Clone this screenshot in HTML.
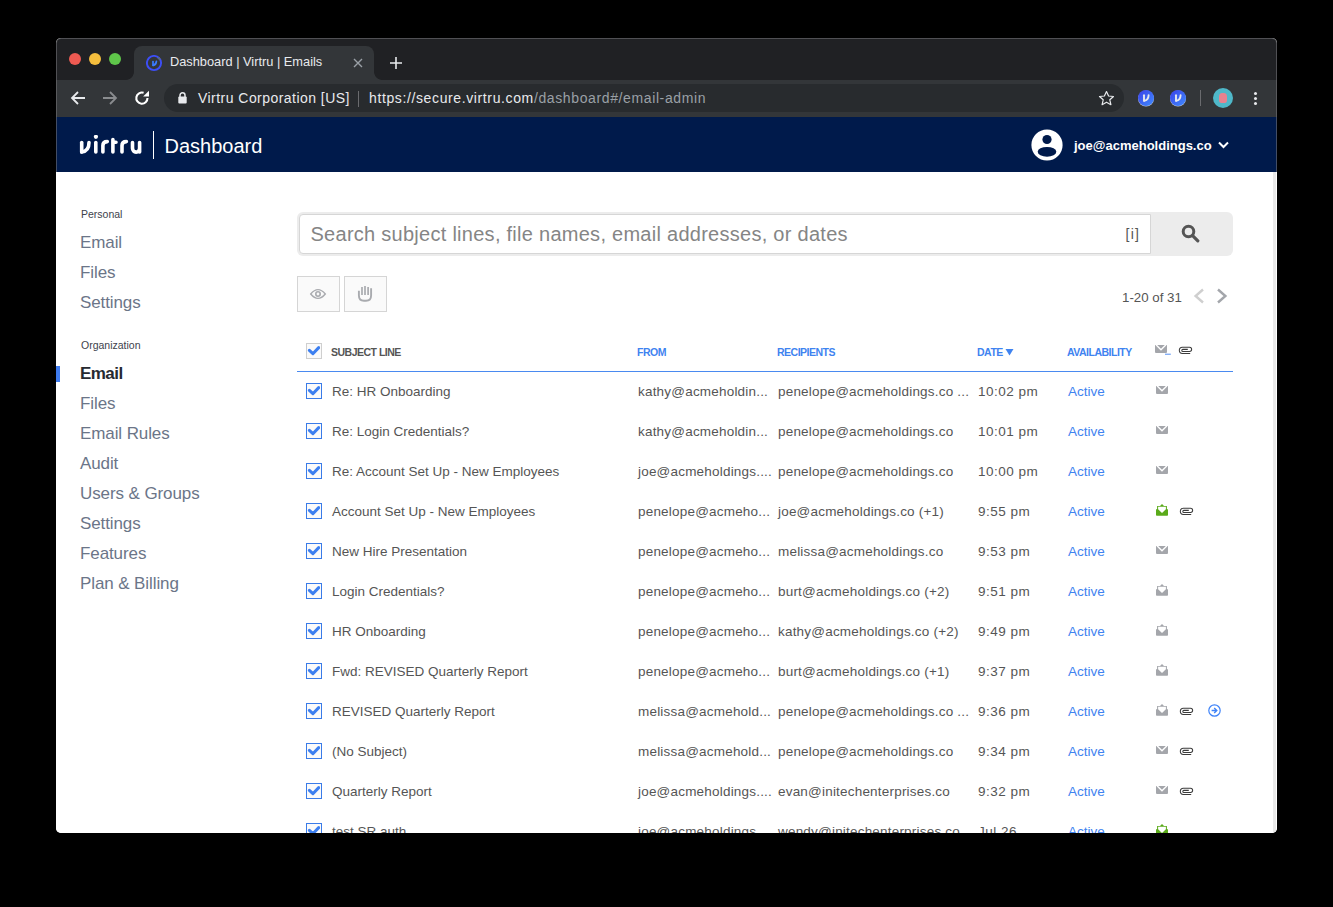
<!DOCTYPE html>
<html><head><meta charset="utf-8">
<style>
*{box-sizing:border-box;margin:0;padding:0}
html,body{width:1333px;height:907px;overflow:hidden;background:#000;font-family:"Liberation Sans",sans-serif}
.abs{position:absolute}
#win{position:absolute;left:56px;top:38px;width:1221px;height:795px;border-radius:5px;overflow:hidden;background:#fff}
#frame{position:absolute;left:56px;top:38px;width:1221px;height:134px;border-radius:5px 5px 0 0;border:1px solid rgba(120,121,124,0.55);border-bottom:none;pointer-events:none}
#tabbar{position:absolute;left:0;top:0;width:1221px;height:42px;background:#202124;border-radius:5px 5px 0 0}
.dot{position:absolute;width:12.5px;height:12.5px;border-radius:50%;top:14.75px}
#tab{position:absolute;left:78px;top:7.6px;width:240px;height:34.4px;background:#333639;border-radius:8px 8px 0 0}
#toolbar{position:absolute;left:0;top:42px;width:1221px;height:37px;background:#333639}
#omni{position:absolute;left:108px;top:4px;width:960px;height:27.5px;background:#282b2e;border-radius:14px}
#header{position:absolute;left:0;top:78.5px;width:1221px;height:55.5px;background:#001a4b}
#page{position:absolute;left:0;top:134px;width:1221px;height:661px;background:#fff}
#scroll{position:absolute;left:1216.8px;top:0;width:3.4px;height:662px;background:#e9e9e9}
.side{position:absolute;left:24px;color:#6b7588;font-size:17px;letter-spacing:-0.1px;white-space:nowrap}
.sidehead{position:absolute;left:25px;color:#3d424c;font-size:10.5px;white-space:nowrap}

.cb{position:absolute;width:16px;height:16px;border:1.5px solid #3a7be8;background:#fafafa}
.cb svg{position:absolute;left:-0.2px;top:0px}
.row{position:absolute;left:0;width:1221px;height:40px}
.cell{position:absolute;top:13px;font-size:13.5px;line-height:16px;color:#555;white-space:nowrap}
.hd{position:absolute;top:175px;font-size:10.5px;line-height:11px;letter-spacing:-0.5px;font-weight:bold;color:#3f83f0;white-space:nowrap}
</style></head><body>
<div id="win">
  <div id="tabbar">
    <div class="dot" style="left:12.75px;background:#ee5a52"></div>
    <div class="dot" style="left:32.75px;background:#f5be3d"></div>
    <div class="dot" style="left:52.75px;background:#5fc64a"></div>
    <div class="abs" style="left:318px;top:34px;width:8px;height:8px;background:radial-gradient(circle at 100% 0%,#202124 7.5px,#333639 8.2px)"></div>
    <div class="abs" style="left:70px;top:34px;width:8px;height:8px;background:radial-gradient(circle at 0% 0%,#202124 7.5px,#333639 8.2px)"></div>
    <div id="tab">
      <svg class="abs" style="left:12px;top:9.4px" width="17" height="17" viewBox="0 0 17 17"><circle cx="8" cy="8" r="7.1" fill="none" stroke="#3d4ef5" stroke-width="1.9"/><path d="M11.9 2.9A7.1 7.1 0 0 1 14.1 4.5" fill="none" stroke="#5a6a80" stroke-width="1.9"/><g fill="none" stroke="#3a7bff" stroke-width="1.7" stroke-linecap="round"><path d="M7 6.6V10.3"/><path d="M10.4 6.4Q10.2 9.8 7.2 10.3"/></g></svg>
      <div class="abs" style="left:36px;top:8.4px;font-size:12.8px;color:#e8eaed;white-space:nowrap">Dashboard | Virtru | Emails</div>
      <svg class="abs" style="left:219px;top:12.4px" width="10" height="10" viewBox="0 0 10 10"><path d="M1 1L9 9M9 1L1 9" stroke="#9aa0a6" stroke-width="1.4"/></svg>
    </div>
    <svg class="abs" style="left:333px;top:18px" width="14" height="14" viewBox="0 0 14 14"><path d="M7 1V13M1 7H13" stroke="#e8eaed" stroke-width="1.6"/></svg>
  </div>
  <div id="toolbar">
    <svg class="abs" style="left:14px;top:10px" width="16" height="16" viewBox="0 0 16 16"><path d="M15 8H2M8 2L2 8L8 14" fill="none" stroke="#e8eaed" stroke-width="1.8"/></svg>
    <svg class="abs" style="left:46px;top:10px" width="16" height="16" viewBox="0 0 16 16"><path d="M1 8H14M8 2L14 8L8 14" fill="none" stroke="#8a8c8f" stroke-width="1.8"/></svg>
    <svg class="abs" style="left:78px;top:10px" width="17" height="17" viewBox="0 0 17 17"><path d="M13.5 8.1A5.6 5.6 0 1 1 9.6 2.8" fill="none" stroke="#fff" stroke-width="2.1"/><path d="M9.1 6.5H15V0.7Z" fill="#fff"/></svg>
    <div id="omni">
      <svg class="abs" style="left:13.5px;top:7.8px" width="9" height="12" viewBox="0 0 9 12"><path d="M2 5V3.3A2.5 2.5 0 0 1 7 3.3V5" fill="none" stroke="#e8eaed" stroke-width="1.5"/><rect x="0.3" y="4.4" width="8.4" height="7" rx="1" fill="#e8eaed"/></svg>
      <div class="abs" style="left:34px;top:6px;font-size:14px;letter-spacing:0.46px;color:#e8eaed;white-space:nowrap">Virtru Corporation [US]</div>
      <div class="abs" style="left:194px;top:7px;width:1px;height:16px;background:#6a6b6e"></div>
      <div class="abs" style="left:205px;top:6px;font-size:14px;letter-spacing:0.62px;color:#9aa0a6;white-space:nowrap"><span style="color:#e8eaed">https://secure.virtru.com</span>/dashboard#/email-admin</div>
      <svg class="abs" style="left:934px;top:6px" width="17" height="17" viewBox="0 0 17 17"><path d="M8.5 1.5L10.6 6L15.5 6.5L11.8 9.8L12.9 14.7L8.5 12.2L4.1 14.7L5.2 9.8L1.5 6.5L6.4 6Z" fill="none" stroke="#e8eaed" stroke-width="1.2" stroke-linejoin="round"/></svg>
    </div>
    <svg class="abs" style="left:1082px;top:10px" width="17" height="17" viewBox="0 0 17 17"><defs><linearGradient id="g1082" x1="0" y1="0" x2="1" y2="1"><stop offset="0" stop-color="#3b3fe8"/><stop offset="1" stop-color="#3f8cff"/></linearGradient></defs><circle cx="8" cy="8.6" r="8" fill="#c9cbd4"/><circle cx="8" cy="8" r="8" fill="url(#g1082)"/><g fill="none" stroke="#e6e7ee" stroke-width="1.9" stroke-linecap="round"><path d="M6 5.2V10.8"/><path d="M10.6 5.2Q10.4 10.2 6.2 10.8"/></g></svg>
    <svg class="abs" style="left:1114px;top:10px" width="17" height="17" viewBox="0 0 17 17"><defs><linearGradient id="g1114" x1="0" y1="0" x2="1" y2="1"><stop offset="0" stop-color="#3b3fe8"/><stop offset="1" stop-color="#3f8cff"/></linearGradient></defs><circle cx="8" cy="8.6" r="8" fill="#c9cbd4"/><circle cx="8" cy="8" r="8" fill="url(#g1114)"/><g fill="none" stroke="#e6e7ee" stroke-width="1.9" stroke-linecap="round"><path d="M6 5.2V10.8"/><path d="M10.6 5.2Q10.4 10.2 6.2 10.8"/></g></svg>
    <div class="abs" style="left:1144px;top:10px;width:1px;height:16px;background:#6a6b6e"></div>
    <div class="abs" style="left:1157px;top:8px;width:20px;height:20px;border-radius:50%;background:#4fb8c9"></div>
    <div class="abs" style="left:1163px;top:13px;width:8px;height:10px;border-radius:40% 40% 30% 30%;background:#e8828f"></div>
    <div class="abs" style="left:1198px;top:12px;width:3px;height:3px;border-radius:50%;background:#e8eaed;box-shadow:0 5px 0 #e8eaed,0 10px 0 #e8eaed"></div>
  </div>
  <div id="header">
    <svg class="abs" style="left:23px;top:18px" width="64" height="22" viewBox="0 0 64 22"><g fill="none" stroke="#fff" stroke-width="3.6" stroke-linecap="round"><path d="M2.7 7.6V17"/><path d="M10 7.6Q10 16.3 2.7 17"/><path d="M16.8 7.6V17"/><path d="M23.9 17V10.5Q23.9 6.6 28.3 6.6"/><path d="M33.9 4.6V17M33.9 7.3H37"/><path d="M43 17V10.5Q43 6.6 47.4 6.6"/><path d="M53.5 7.6V13.3A3.55 3.8 0 0 0 60.6 13.3V7.6M60.6 12V17"/></g><circle cx="16.9" cy="1.8" r="2.1" fill="#fff"/></svg>
    <div class="abs" style="left:97px;top:14px;width:1px;height:28px;background:#fff"></div>
    <div class="abs" style="left:108.5px;top:18.5px;font-size:20px;color:#fff;white-space:nowrap">Dashboard</div>
    <svg class="abs" style="left:975.3px;top:12.3px" width="32" height="32" viewBox="0 0 32 32"><circle cx="16" cy="16" r="15.6" fill="#fff"/><circle cx="16" cy="10.5" r="4.6" fill="#001a4b"/><ellipse cx="16" cy="22.8" rx="9.3" ry="4.9" fill="#001a4b"/></svg>
    <div class="abs" style="left:1018px;top:21px;font-size:13px;font-weight:bold;color:#fff;white-space:nowrap">joe@acmeholdings.co</div>
    <svg class="abs" style="left:1162px;top:24px" width="11" height="8" viewBox="0 0 11 8"><path d="M1 1.5L5.5 6L10 1.5" fill="none" stroke="#fff" stroke-width="2"/></svg>
  </div>
  <div id="page">
    <div class="sidehead" style="top:36px">Personal</div>
    <div class="side" style="top:61px">Email</div>
    <div class="side" style="top:91px">Files</div>
    <div class="side" style="top:121px">Settings</div>
    <div class="sidehead" style="top:167px">Organization</div>
    <div class="abs" style="left:0;top:194px;width:4px;height:16px;background:#3f7cf0"></div>
    <div class="side" style="top:192px;color:#262a31;font-weight:bold;letter-spacing:-0.55px">Email</div>
    <div class="side" style="top:222px">Files</div>
    <div class="side" style="top:252px">Email Rules</div>
    <div class="side" style="top:282px">Audit</div>
    <div class="side" style="top:312px">Users &amp; Groups</div>
    <div class="side" style="top:342px">Settings</div>
    <div class="side" style="top:372px">Features</div>
    <div class="side" style="top:402px">Plan &amp; Billing</div>
    <div class="abs" style="left:241px;top:40px;width:936px;height:44px;background:#ececec;border-radius:6px"></div>
    <div class="abs" style="left:243px;top:42px;width:852px;height:40px;background:#fff;border:1px solid #d6d6d6;border-radius:4px 0 0 4px"></div>
    <div class="abs" style="left:254.5px;top:51px;font-size:20px;line-height:22px;letter-spacing:0.27px;color:#858585;white-space:nowrap">Search subject lines, file names, email addresses, or dates</div>
    <div class="abs" style="left:1069.5px;top:53px;font-size:14px;line-height:18px;letter-spacing:1.3px;color:#555;white-space:nowrap">[i]</div>
    <svg class="abs" style="left:1125px;top:52px" width="19" height="19" viewBox="0 0 19 19"><circle cx="7.5" cy="7.5" r="5.3" fill="none" stroke="#555" stroke-width="3"/><path d="M11.6 11.6L16.8 16.8" stroke="#555" stroke-width="3.2" stroke-linecap="round"/></svg>
    <div class="abs" style="left:241px;top:104px;width:43px;height:36px;background:#fafafa;border:1px solid #d5d5d5"></div>
    <svg class="abs" style="left:252px;top:115px" width="20" height="14" viewBox="0 0 20 14"><path d="M2.7 7Q10 -1.8 17.3 7Q10 15.8 2.7 7Z" fill="none" stroke="#a9abaf" stroke-width="1.4"/><circle cx="10" cy="7" r="2.2" fill="none" stroke="#a9abaf" stroke-width="1.6"/></svg>
    <div class="abs" style="left:288px;top:104px;width:43px;height:36px;background:#fafafa;border:1px solid #d5d5d5"></div>
    <svg class="abs" style="left:300px;top:112px" width="18" height="19" viewBox="0 0 18 19"><path d="M2.9 6.8V11.5Q2.9 16.8 8 16.8H10Q15.1 16.8 15.1 11.5V4.2" fill="none" stroke="#a9abaf" stroke-width="1.9"/><path d="M6 11V3M9 11V1.9M12.1 11V3" stroke="#a9abaf" stroke-width="1.7"/></svg>
    <div class="abs" style="left:1066px;top:117.5px;font-size:13.3px;line-height:16px;color:#555;white-space:nowrap">1-20 of 31</div>
    <svg class="abs" style="left:1136px;top:115px" width="14" height="18" viewBox="0 0 14 18"><path d="M11 2.5L3.6 9L11 15.5" fill="none" stroke="#cfcfcf" stroke-width="2.4"/></svg>
    <svg class="abs" style="left:1159px;top:115px" width="14" height="18" viewBox="0 0 14 18"><path d="M3 2.5L10.4 9L3 15.5" fill="none" stroke="#a3a6ab" stroke-width="2.4"/></svg>

    <div class="cb" style="left:250px;top:171px;border:1px solid #cfcfcf"><svg width="13" height="12" viewBox="0 0 13 12" style="left:0.3px;top:-0.5px"><path d="M2.4 6.4L5.9 9.7L11.7 3.6" fill="none" stroke="#3c7ff0" stroke-width="3" stroke-linecap="round" stroke-linejoin="round"/></svg></div>
    <div class="hd" style="left:275px;color:#555">SUBJECT LINE</div>
    <div class="hd" style="left:581px">FROM</div>
    <div class="hd" style="left:721px">RECIPIENTS</div>
    <div class="hd" style="left:921px">DATE</div>
    <svg class="abs" style="left:949px;top:176px" width="9" height="8" viewBox="0 0 9 8"><path d="M0.5 1H8.5L4.5 7.5Z" fill="#3f83f0"/></svg>
    <div class="hd" style="left:1011px">AVAILABILITY</div>
    <svg class="abs" style="left:1099px;top:173px" width="16" height="11" viewBox="0 0 16 11"><path d="M0 0H12V7Q12 8 11 8H1Q0 8 0 7Z" fill="#a4a6ab"/><path d="M1 -0.2L6 4.8L11 -0.2" fill="none" stroke="#fff" stroke-width="1.4"/><rect x="10" y="8.6" width="5.8" height="1.3" fill="#7aa8f5"/></svg>
    <svg class="abs" style="left:1118.5px;top:167px" width="20" height="20" viewBox="0 0 20 20"><path d="M15.2 14.44H7.4A3.085 3.085 0 0 1 7.4 8.27H14.55A2.095 2.095 0 0 1 14.55 12.46H7.85A1.05 1.05 0 0 1 7.85 10.36H12.8" fill="none" stroke="#3c3c3c" stroke-width="1.05"/></svg>
    <div class="abs" style="left:241px;top:198.7px;width:936px;height:1.4px;background:#4a8af0"></div>
    <div class="row" style="top:199px"><div class="cb" style="left:250px;top:12px"><svg width="13" height="12" viewBox="0 0 13 12"><path d="M2.4 6.4L5.9 9.7L11.7 3.6" fill="none" stroke="#3c7ff0" stroke-width="3" stroke-linecap="round" stroke-linejoin="round"/></svg></div><div class="cell" style="left:276px">Re: HR Onboarding</div><div class="cell" style="left:582px;letter-spacing:0.2px">kathy@acmeholdin...</div><div class="cell" style="left:722px;letter-spacing:0.2px">penelope@acmeholdings.co ...</div><div class="cell" style="left:922px;letter-spacing:0.5px">10:02 pm</div><div class="cell" style="left:1012px;color:#3f83f0">Active</div><svg class="abs" style="left:1100px;top:14.8px" width="12" height="8" viewBox="0 0 12 8"><path d="M0 0H12V7Q12 8 11 8H1Q0 8 0 7Z" fill="#a4a6ab"/><path d="M1 -0.2L6 4.8L11 -0.2" fill="none" stroke="#fff" stroke-width="1.4"/></svg></div>
    <div class="row" style="top:239px"><div class="cb" style="left:250px;top:12px"><svg width="13" height="12" viewBox="0 0 13 12"><path d="M2.4 6.4L5.9 9.7L11.7 3.6" fill="none" stroke="#3c7ff0" stroke-width="3" stroke-linecap="round" stroke-linejoin="round"/></svg></div><div class="cell" style="left:276px">Re: Login Credentials?</div><div class="cell" style="left:582px;letter-spacing:0.2px">kathy@acmeholdin...</div><div class="cell" style="left:722px;letter-spacing:0.2px">penelope@acmeholdings.co</div><div class="cell" style="left:922px;letter-spacing:0.5px">10:01 pm</div><div class="cell" style="left:1012px;color:#3f83f0">Active</div><svg class="abs" style="left:1100px;top:14.8px" width="12" height="8" viewBox="0 0 12 8"><path d="M0 0H12V7Q12 8 11 8H1Q0 8 0 7Z" fill="#a4a6ab"/><path d="M1 -0.2L6 4.8L11 -0.2" fill="none" stroke="#fff" stroke-width="1.4"/></svg></div>
    <div class="row" style="top:279px"><div class="cb" style="left:250px;top:12px"><svg width="13" height="12" viewBox="0 0 13 12"><path d="M2.4 6.4L5.9 9.7L11.7 3.6" fill="none" stroke="#3c7ff0" stroke-width="3" stroke-linecap="round" stroke-linejoin="round"/></svg></div><div class="cell" style="left:276px">Re: Account Set Up - New Employees</div><div class="cell" style="left:582px;letter-spacing:0.2px">joe@acmeholdings....</div><div class="cell" style="left:722px;letter-spacing:0.2px">penelope@acmeholdings.co</div><div class="cell" style="left:922px;letter-spacing:0.5px">10:00 pm</div><div class="cell" style="left:1012px;color:#3f83f0">Active</div><svg class="abs" style="left:1100px;top:14.8px" width="12" height="8" viewBox="0 0 12 8"><path d="M0 0H12V7Q12 8 11 8H1Q0 8 0 7Z" fill="#a4a6ab"/><path d="M1 -0.2L6 4.8L11 -0.2" fill="none" stroke="#fff" stroke-width="1.4"/></svg></div>
    <div class="row" style="top:319px"><div class="cb" style="left:250px;top:12px"><svg width="13" height="12" viewBox="0 0 13 12"><path d="M2.4 6.4L5.9 9.7L11.7 3.6" fill="none" stroke="#3c7ff0" stroke-width="3" stroke-linecap="round" stroke-linejoin="round"/></svg></div><div class="cell" style="left:276px">Account Set Up - New Employees</div><div class="cell" style="left:582px;letter-spacing:0.2px">penelope@acmeho...</div><div class="cell" style="left:722px;letter-spacing:0.2px">joe@acmeholdings.co (+1)</div><div class="cell" style="left:922px;letter-spacing:0.5px">9:55 pm</div><div class="cell" style="left:1012px;color:#3f83f0">Active</div><svg class="abs" style="left:1100px;top:12.8px" width="12" height="12" viewBox="0 0 12 12"><path d="M6 0L8 2.1H10.9V5L12 5.5V11Q12 11.8 11.2 11.8H0.8Q0 11.8 0 11V5.5L1.1 5V2.1H4Z" fill="#5aaa1a"/><path d="M2.1 2.8H9.9V5.2L6 9L2.1 5.2Z" fill="#fff"/></svg><svg class="abs" style="left:1120px;top:9px" width="20" height="20" viewBox="0 0 20 20"><path d="M15.2 14.44H7.4A3.085 3.085 0 0 1 7.4 8.27H14.55A2.095 2.095 0 0 1 14.55 12.46H7.85A1.05 1.05 0 0 1 7.85 10.36H12.8" fill="none" stroke="#3c3c3c" stroke-width="1.05"/></svg></div>
    <div class="row" style="top:359px"><div class="cb" style="left:250px;top:12px"><svg width="13" height="12" viewBox="0 0 13 12"><path d="M2.4 6.4L5.9 9.7L11.7 3.6" fill="none" stroke="#3c7ff0" stroke-width="3" stroke-linecap="round" stroke-linejoin="round"/></svg></div><div class="cell" style="left:276px">New Hire Presentation</div><div class="cell" style="left:582px;letter-spacing:0.2px">penelope@acmeho...</div><div class="cell" style="left:722px;letter-spacing:0.2px">melissa@acmeholdings.co</div><div class="cell" style="left:922px;letter-spacing:0.5px">9:53 pm</div><div class="cell" style="left:1012px;color:#3f83f0">Active</div><svg class="abs" style="left:1100px;top:14.8px" width="12" height="8" viewBox="0 0 12 8"><path d="M0 0H12V7Q12 8 11 8H1Q0 8 0 7Z" fill="#a4a6ab"/><path d="M1 -0.2L6 4.8L11 -0.2" fill="none" stroke="#fff" stroke-width="1.4"/></svg></div>
    <div class="row" style="top:399px"><div class="cb" style="left:250px;top:12px"><svg width="13" height="12" viewBox="0 0 13 12"><path d="M2.4 6.4L5.9 9.7L11.7 3.6" fill="none" stroke="#3c7ff0" stroke-width="3" stroke-linecap="round" stroke-linejoin="round"/></svg></div><div class="cell" style="left:276px">Login Credentials?</div><div class="cell" style="left:582px;letter-spacing:0.2px">penelope@acmeho...</div><div class="cell" style="left:722px;letter-spacing:0.2px">burt@acmeholdings.co (+2)</div><div class="cell" style="left:922px;letter-spacing:0.5px">9:51 pm</div><div class="cell" style="left:1012px;color:#3f83f0">Active</div><svg class="abs" style="left:1100px;top:12.8px" width="12" height="12" viewBox="0 0 12 12"><path d="M6 0L8 2.1H10.9V5L12 5.5V11Q12 11.8 11.2 11.8H0.8Q0 11.8 0 11V5.5L1.1 5V2.1H4Z" fill="#a4a6ab"/><path d="M2.1 2.8H9.9V5.2L6 9L2.1 5.2Z" fill="#fff"/></svg></div>
    <div class="row" style="top:439px"><div class="cb" style="left:250px;top:12px"><svg width="13" height="12" viewBox="0 0 13 12"><path d="M2.4 6.4L5.9 9.7L11.7 3.6" fill="none" stroke="#3c7ff0" stroke-width="3" stroke-linecap="round" stroke-linejoin="round"/></svg></div><div class="cell" style="left:276px">HR Onboarding</div><div class="cell" style="left:582px;letter-spacing:0.2px">penelope@acmeho...</div><div class="cell" style="left:722px;letter-spacing:0.2px">kathy@acmeholdings.co (+2)</div><div class="cell" style="left:922px;letter-spacing:0.5px">9:49 pm</div><div class="cell" style="left:1012px;color:#3f83f0">Active</div><svg class="abs" style="left:1100px;top:12.8px" width="12" height="12" viewBox="0 0 12 12"><path d="M6 0L8 2.1H10.9V5L12 5.5V11Q12 11.8 11.2 11.8H0.8Q0 11.8 0 11V5.5L1.1 5V2.1H4Z" fill="#a4a6ab"/><path d="M2.1 2.8H9.9V5.2L6 9L2.1 5.2Z" fill="#fff"/></svg></div>
    <div class="row" style="top:479px"><div class="cb" style="left:250px;top:12px"><svg width="13" height="12" viewBox="0 0 13 12"><path d="M2.4 6.4L5.9 9.7L11.7 3.6" fill="none" stroke="#3c7ff0" stroke-width="3" stroke-linecap="round" stroke-linejoin="round"/></svg></div><div class="cell" style="left:276px">Fwd: REVISED Quarterly Report</div><div class="cell" style="left:582px;letter-spacing:0.2px">penelope@acmeho...</div><div class="cell" style="left:722px;letter-spacing:0.2px">burt@acmeholdings.co (+1)</div><div class="cell" style="left:922px;letter-spacing:0.5px">9:37 pm</div><div class="cell" style="left:1012px;color:#3f83f0">Active</div><svg class="abs" style="left:1100px;top:12.8px" width="12" height="12" viewBox="0 0 12 12"><path d="M6 0L8 2.1H10.9V5L12 5.5V11Q12 11.8 11.2 11.8H0.8Q0 11.8 0 11V5.5L1.1 5V2.1H4Z" fill="#a4a6ab"/><path d="M2.1 2.8H9.9V5.2L6 9L2.1 5.2Z" fill="#fff"/></svg></div>
    <div class="row" style="top:519px"><div class="cb" style="left:250px;top:12px"><svg width="13" height="12" viewBox="0 0 13 12"><path d="M2.4 6.4L5.9 9.7L11.7 3.6" fill="none" stroke="#3c7ff0" stroke-width="3" stroke-linecap="round" stroke-linejoin="round"/></svg></div><div class="cell" style="left:276px">REVISED Quarterly Report</div><div class="cell" style="left:582px;letter-spacing:0.2px">melissa@acmehold...</div><div class="cell" style="left:722px;letter-spacing:0.2px">penelope@acmeholdings.co ...</div><div class="cell" style="left:922px;letter-spacing:0.5px">9:36 pm</div><div class="cell" style="left:1012px;color:#3f83f0">Active</div><svg class="abs" style="left:1100px;top:12.8px" width="12" height="12" viewBox="0 0 12 12"><path d="M6 0L8 2.1H10.9V5L12 5.5V11Q12 11.8 11.2 11.8H0.8Q0 11.8 0 11V5.5L1.1 5V2.1H4Z" fill="#a4a6ab"/><path d="M2.1 2.8H9.9V5.2L6 9L2.1 5.2Z" fill="#fff"/></svg><svg class="abs" style="left:1120px;top:9px" width="20" height="20" viewBox="0 0 20 20"><path d="M15.2 14.44H7.4A3.085 3.085 0 0 1 7.4 8.27H14.55A2.095 2.095 0 0 1 14.55 12.46H7.85A1.05 1.05 0 0 1 7.85 10.36H12.8" fill="none" stroke="#3c3c3c" stroke-width="1.05"/></svg><svg class="abs" style="left:1151.5px;top:12.5px" width="13" height="13" viewBox="0 0 13 13"><circle cx="6.5" cy="6.5" r="5.7" fill="none" stroke="#3f83f8" stroke-width="1.2"/><path d="M3.6 6.5H8.6M6.2 3.9L8.8 6.5L6.2 9.1" fill="none" stroke="#3f83f8" stroke-width="1.4"/></svg></div>
    <div class="row" style="top:559px"><div class="cb" style="left:250px;top:12px"><svg width="13" height="12" viewBox="0 0 13 12"><path d="M2.4 6.4L5.9 9.7L11.7 3.6" fill="none" stroke="#3c7ff0" stroke-width="3" stroke-linecap="round" stroke-linejoin="round"/></svg></div><div class="cell" style="left:276px">(No Subject)</div><div class="cell" style="left:582px;letter-spacing:0.2px">melissa@acmehold...</div><div class="cell" style="left:722px;letter-spacing:0.2px">penelope@acmeholdings.co</div><div class="cell" style="left:922px;letter-spacing:0.5px">9:34 pm</div><div class="cell" style="left:1012px;color:#3f83f0">Active</div><svg class="abs" style="left:1100px;top:14.8px" width="12" height="8" viewBox="0 0 12 8"><path d="M0 0H12V7Q12 8 11 8H1Q0 8 0 7Z" fill="#a4a6ab"/><path d="M1 -0.2L6 4.8L11 -0.2" fill="none" stroke="#fff" stroke-width="1.4"/></svg><svg class="abs" style="left:1120px;top:9px" width="20" height="20" viewBox="0 0 20 20"><path d="M15.2 14.44H7.4A3.085 3.085 0 0 1 7.4 8.27H14.55A2.095 2.095 0 0 1 14.55 12.46H7.85A1.05 1.05 0 0 1 7.85 10.36H12.8" fill="none" stroke="#3c3c3c" stroke-width="1.05"/></svg></div>
    <div class="row" style="top:599px"><div class="cb" style="left:250px;top:12px"><svg width="13" height="12" viewBox="0 0 13 12"><path d="M2.4 6.4L5.9 9.7L11.7 3.6" fill="none" stroke="#3c7ff0" stroke-width="3" stroke-linecap="round" stroke-linejoin="round"/></svg></div><div class="cell" style="left:276px">Quarterly Report</div><div class="cell" style="left:582px;letter-spacing:0.2px">joe@acmeholdings....</div><div class="cell" style="left:722px;letter-spacing:0.2px">evan@initechenterprises.co</div><div class="cell" style="left:922px;letter-spacing:0.5px">9:32 pm</div><div class="cell" style="left:1012px;color:#3f83f0">Active</div><svg class="abs" style="left:1100px;top:14.8px" width="12" height="8" viewBox="0 0 12 8"><path d="M0 0H12V7Q12 8 11 8H1Q0 8 0 7Z" fill="#a4a6ab"/><path d="M1 -0.2L6 4.8L11 -0.2" fill="none" stroke="#fff" stroke-width="1.4"/></svg><svg class="abs" style="left:1120px;top:9px" width="20" height="20" viewBox="0 0 20 20"><path d="M15.2 14.44H7.4A3.085 3.085 0 0 1 7.4 8.27H14.55A2.095 2.095 0 0 1 14.55 12.46H7.85A1.05 1.05 0 0 1 7.85 10.36H12.8" fill="none" stroke="#3c3c3c" stroke-width="1.05"/></svg></div>
    <div class="row" style="top:639px"><div class="cb" style="left:250px;top:12px"><svg width="13" height="12" viewBox="0 0 13 12"><path d="M2.4 6.4L5.9 9.7L11.7 3.6" fill="none" stroke="#3c7ff0" stroke-width="3" stroke-linecap="round" stroke-linejoin="round"/></svg></div><div class="cell" style="left:276px">test SR auth</div><div class="cell" style="left:582px;letter-spacing:0.2px">joe@acmeholdings....</div><div class="cell" style="left:722px;letter-spacing:0.2px">wendy@initechenterprises.co</div><div class="cell" style="left:922px;letter-spacing:0.5px">Jul 26</div><div class="cell" style="left:1012px;color:#3f83f0">Active</div><svg class="abs" style="left:1100px;top:12.8px" width="12" height="12" viewBox="0 0 12 12"><path d="M6 0L8 2.1H10.9V5L12 5.5V11Q12 11.8 11.2 11.8H0.8Q0 11.8 0 11V5.5L1.1 5V2.1H4Z" fill="#5aaa1a"/><path d="M2.1 2.8H9.9V5.2L6 9L2.1 5.2Z" fill="#fff"/></svg></div>
    <div id="scroll"></div>
  </div>
</div>
<div id="frame"></div>
</body></html>
